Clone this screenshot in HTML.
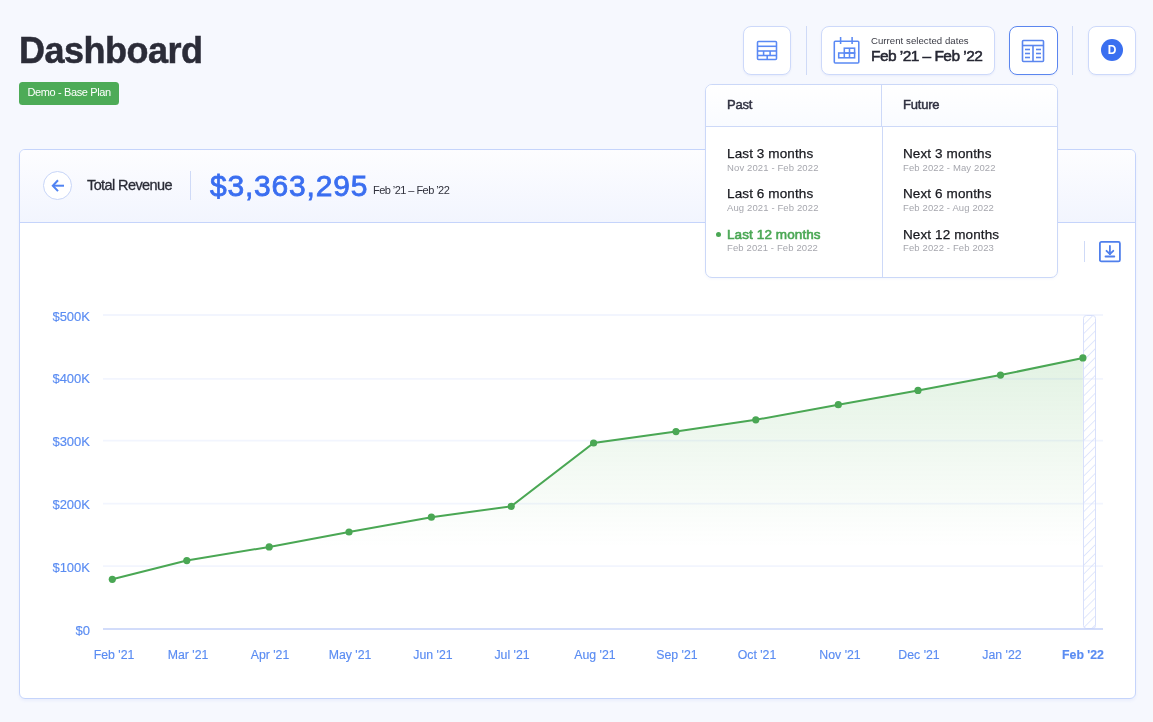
<!DOCTYPE html>
<html><head><meta charset="utf-8">
<style>
*{box-sizing:border-box;margin:0;padding:0}
html,body{width:1153px;height:722px;overflow:hidden;background:#f6f8fe;font-family:"Liberation Sans",sans-serif;position:relative}
.abs{position:absolute;will-change:transform}
.title{left:19px;top:29px;font-size:36px;font-weight:bold;color:#2b2c38;line-height:44px;white-space:nowrap;letter-spacing:-0.5px;-webkit-text-stroke:0.5px #2b2c38}
.badge{left:19px;top:82px;width:100px;height:23px;background:#4dab57;border-radius:3.5px;color:#fff;font-size:11px;line-height:21px;padding-left:8.5px;letter-spacing:-0.38px;white-space:nowrap}
.btn{background:#fff;border:1px solid #cdd9fa;border-radius:8px;box-shadow:0 1px 2px rgba(60,90,200,0.08)}
.vdiv{width:1px;background:#cfdaf7}
.card{left:19px;top:149px;width:1117px;height:550px;background:#fff;border:1px solid #c5d4fb;border-radius:6px;overflow:hidden;box-shadow:0 2px 3px rgba(80,110,220,0.07)}
.chead{left:0;top:0;width:100%;height:73px;background:linear-gradient(#fdfdff,#f2f5fe);border-bottom:1px solid #c5d4fb}
.dd{left:705px;top:84px;width:353px;height:194px;background:#fff;border:1px solid #cbd8f8;border-radius:7px;box-shadow:0 1px 3px rgba(60,90,200,0.05);overflow:hidden}
.ddh{font-size:13px;color:#2f3040;white-space:nowrap;letter-spacing:-0.2px;-webkit-text-stroke:0.45px #2f3040}
.opt{font-size:13.5px;color:#18191f;white-space:nowrap;letter-spacing:0.12px;-webkit-text-stroke:0.25px #18191f}
.sub{font-size:9.5px;color:#a6a7ae;white-space:nowrap;letter-spacing:0.12px}
.ylab{font-size:13px;color:#5a8cf2;-webkit-text-stroke:0.15px #5a8cf2;text-align:right;width:60px;white-space:nowrap}
.xlab{font-size:12.3px;color:#5a8cf2;-webkit-text-stroke:0.15px #5a8cf2;white-space:nowrap;text-align:center;width:80px}
</style></head><body>
<div class="abs title">Dashboard</div>
<div class="abs badge">Demo - Base Plan</div>

<!-- toolbar -->
<div class="abs btn" style="left:743px;top:26px;width:48px;height:49px"></div>
<svg class="abs" style="left:743px;top:26px" width="48" height="49" viewBox="0 0 48 49">
  <g fill="none" stroke="#5a89f4" stroke-width="1.55">
    <rect x="14.5" y="15.5" width="19" height="18" rx="1"/>
    <line x1="14.5" y1="20.3" x2="33.5" y2="20.3"/>
    <line x1="14.5" y1="25" x2="33.5" y2="25"/>
    <line x1="14.5" y1="29.5" x2="33.5" y2="29.5"/>
    <line x1="20.6" y1="25" x2="20.6" y2="29.5"/>
    <line x1="27.1" y1="25" x2="27.1" y2="29.5"/>
    <line x1="24.2" y1="29.5" x2="24.2" y2="33.5"/>
  </g>
</svg>
<div class="abs vdiv" style="left:806px;top:26px;height:49px"></div>
<div class="abs btn" style="left:821px;top:26px;width:174px;height:49px"></div>
<svg class="abs" style="left:821px;top:26px" width="48" height="49" viewBox="0 0 48 49">
  <g fill="none" stroke="#5a89f4" stroke-width="1.55">
    <rect x="13.3" y="15.2" width="24.5" height="21.8" rx="1"/>
    <line x1="19.6" y1="11" x2="19.6" y2="18"/>
    <line x1="31.1" y1="11" x2="31.1" y2="18"/>
    <rect x="17.7" y="27" width="15.9" height="4.8"/>
    <rect x="23.3" y="22.2" width="10.3" height="4.8"/>
    <line x1="23.3" y1="27" x2="23.3" y2="31.8"/>
    <line x1="28.5" y1="22.2" x2="28.5" y2="31.8"/>
  </g>
</svg>
<div class="abs" style="left:871px;top:35.2px;font-size:9.6px;color:#3a3b45;white-space:nowrap;letter-spacing:0.05px">Current selected dates</div>
<div class="abs" style="left:871px;top:46.9px;font-size:15.5px;color:#262733;white-space:nowrap;letter-spacing:-0.55px;-webkit-text-stroke:0.5px #262733">Feb ’21 – Feb ’22</div>
<div class="abs btn" style="left:1009px;top:26px;width:49px;height:49px;border-color:#5b86ef"></div>
<svg class="abs" style="left:1009px;top:27px" width="49" height="49" viewBox="0 0 49 49">
  <g fill="none" stroke="#5b86ef" stroke-width="1.6">
    <rect x="13.5" y="13.5" width="21" height="21" rx="1"/>
    <line x1="13.5" y1="18.5" x2="34.5" y2="18.5"/>
    <line x1="24" y1="18.5" x2="24" y2="34.5"/>
  </g>
  <g stroke="#5b86ef" stroke-width="1.6">
    <line x1="16" y1="22.5" x2="21" y2="22.5"/><line x1="16" y1="26.5" x2="21" y2="26.5"/><line x1="16" y1="30.5" x2="21" y2="30.5"/>
    <line x1="27" y1="22.5" x2="32" y2="22.5"/><line x1="27" y1="26.5" x2="32" y2="26.5"/><line x1="27" y1="30.5" x2="32" y2="30.5"/>
  </g>
</svg>
<div class="abs vdiv" style="left:1072px;top:26px;height:49px"></div>
<div class="abs btn" style="left:1088px;top:26px;width:48px;height:49px"></div>
<div class="abs" style="left:1101px;top:39px;width:22px;height:22px;border-radius:50%;background:#3a6ff0;color:#fff;font-size:12px;font-weight:bold;text-align:center;line-height:22px">D</div>

<!-- card -->
<div class="abs card">
  <div class="abs chead"></div>
</div>


<!-- card header content -->
<div class="abs" style="left:43px;top:171px;width:29px;height:29px;border:1px solid #c6d4f7;border-radius:50%;background:#fff"></div>
<svg class="abs" style="left:43px;top:171px" width="29" height="29" viewBox="0 0 29 29"><g fill="none" stroke="#5083f2" stroke-width="2" stroke-linecap="butt" stroke-linejoin="miter"><line x1="10" y1="14.7" x2="21" y2="14.7"/><polyline points="15,9.3 9.8,14.7 15,20.1"/></g></svg>
<div class="abs" style="left:87px;top:176.5px;font-size:14.5px;color:#2a2b36;white-space:nowrap;letter-spacing:-0.6px;-webkit-text-stroke:0.3px #2a2b36">Total Revenue</div>
<div class="abs vdiv" style="left:190px;top:171px;height:29px"></div>
<div class="abs" style="left:210px;top:167.7px;font-size:30px;color:#3a6ef0;white-space:nowrap;line-height:36px;letter-spacing:0.8px;-webkit-text-stroke:0.8px #3a6ef0">$3,363,295</div>
<div class="abs" style="left:372.6px;top:183.6px;font-size:11px;color:#30313c;white-space:nowrap;letter-spacing:-0.55px">Feb ’21 – Feb ’22</div>
<!-- download -->
<div class="abs vdiv" style="left:1084px;top:241px;height:21px"></div>
<svg class="abs" style="left:1098px;top:240px" width="24" height="23" viewBox="0 0 24 23"><g fill="none" stroke="#4f7fec" stroke-width="1.8" stroke-linecap="round" stroke-linejoin="round"><rect x="1.9" y="1.9" width="20" height="19.5" rx="1.5"/><line x1="11.9" y1="6" x2="11.9" y2="14"/><polyline points="8.5,10.8 11.9,14 15.3,10.8"/><line x1="7.5" y1="16.5" x2="16.3" y2="16.5"/></g></svg>
<svg class="abs" style="left:0;top:0" width="1153" height="722" viewBox="0 0 1153 722">
<defs><linearGradient id="ag" x1="0" y1="0" x2="0" y2="1"><stop offset="0" stop-color="#4caf50" stop-opacity="0.16"/><stop offset="0.7" stop-color="#4caf50" stop-opacity="0"/></linearGradient>
<pattern id="hatch" width="6.3" height="6.3" patternUnits="userSpaceOnUse" patternTransform="rotate(45)"><line x1="0" y1="0" x2="0" y2="6.3" stroke="#d3dcfb" stroke-width="1.3"/></pattern></defs>
<line x1="103" y1="315" x2="1103" y2="315" stroke="#f2f5fe" stroke-width="1.8"/>
<line x1="103" y1="378.8" x2="1103" y2="378.8" stroke="#f2f5fe" stroke-width="1.8"/>
<line x1="103" y1="440.6" x2="1103" y2="440.6" stroke="#f2f5fe" stroke-width="1.8"/>
<line x1="103" y1="503.7" x2="1103" y2="503.7" stroke="#f2f5fe" stroke-width="1.8"/>
<line x1="103" y1="566.2" x2="1103" y2="566.2" stroke="#f2f5fe" stroke-width="1.8"/>
<path d="M112.3,579.3 L186.8,560.6 L269.2,546.9 L349.0,532.0 L431.4,517.2 L511.2,506.3 L593.6,443.0 L676.0,431.6 L755.8,419.8 L838.3,404.7 L918.0,390.4 L1000.5,375.1 L1082.9,357.9 L1082.9,629 L112.3,629 Z" fill="url(#ag)"/>
<rect x="1083.5" y="315.5" width="12" height="313" rx="3" fill="url(#hatch)" stroke="#d8e0fb" stroke-width="1"/>
<line x1="103" y1="628.9" x2="1103" y2="628.9" stroke="#c3d1f8" stroke-width="1.5"/>
<polyline points="112.3,579.3 186.8,560.6 269.2,546.9 349.0,532.0 431.4,517.2 511.2,506.3 593.6,443.0 676.0,431.6 755.8,419.8 838.3,404.7 918.0,390.4 1000.5,375.1 1082.9,357.9" fill="none" stroke="#4aa754" stroke-width="2"/>
<circle cx="112.3" cy="579.3" r="3.6" fill="#4aa754"/>
<circle cx="186.8" cy="560.6" r="3.6" fill="#4aa754"/>
<circle cx="269.2" cy="546.9" r="3.6" fill="#4aa754"/>
<circle cx="349.0" cy="532.0" r="3.6" fill="#4aa754"/>
<circle cx="431.4" cy="517.2" r="3.6" fill="#4aa754"/>
<circle cx="511.2" cy="506.3" r="3.6" fill="#4aa754"/>
<circle cx="593.6" cy="443.0" r="3.6" fill="#4aa754"/>
<circle cx="676.0" cy="431.6" r="3.6" fill="#4aa754"/>
<circle cx="755.8" cy="419.8" r="3.6" fill="#4aa754"/>
<circle cx="838.3" cy="404.7" r="3.6" fill="#4aa754"/>
<circle cx="918.0" cy="390.4" r="3.6" fill="#4aa754"/>
<circle cx="1000.5" cy="375.1" r="3.6" fill="#4aa754"/>
<circle cx="1082.9" cy="357.9" r="3.6" fill="#4aa754"/>
</svg>
<div class="abs ylab" style="left:30px;top:308.6px">$500K</div>
<div class="abs ylab" style="left:30px;top:371.4px">$400K</div>
<div class="abs ylab" style="left:30px;top:434.3px">$300K</div>
<div class="abs ylab" style="left:30px;top:497.1px">$200K</div>
<div class="abs ylab" style="left:30px;top:559.9px">$100K</div>
<div class="abs ylab" style="left:30px;top:622.7px">$0</div>
<div class="abs xlab" style="left:73.5px;top:648px;">Feb '21</div>
<div class="abs xlab" style="left:148.0px;top:648px;">Mar '21</div>
<div class="abs xlab" style="left:230.4px;top:648px;">Apr '21</div>
<div class="abs xlab" style="left:310.2px;top:648px;">May '21</div>
<div class="abs xlab" style="left:392.6px;top:648px;">Jun '21</div>
<div class="abs xlab" style="left:472.4px;top:648px;">Jul '21</div>
<div class="abs xlab" style="left:554.8px;top:648px;">Aug '21</div>
<div class="abs xlab" style="left:637.2px;top:648px;">Sep '21</div>
<div class="abs xlab" style="left:717.0px;top:648px;">Oct '21</div>
<div class="abs xlab" style="left:799.5px;top:648px;">Nov '21</div>
<div class="abs xlab" style="left:879.2px;top:648px;">Dec '21</div>
<div class="abs xlab" style="left:961.7px;top:648px;">Jan '22</div>
<div class="abs xlab" style="left:1042.9px;top:648px;font-weight:bold;"">Feb '22</div>
<!-- dropdown -->
<div class="abs dd">
  <div class="abs" style="left:0;top:0;width:100%;height:42px;background:linear-gradient(#ffffff,#f9fbff);border-bottom:1px solid #cdd9f8"></div>
  <div class="abs" style="left:175px;top:0;width:1px;height:42px;background:#cdd9f8"></div><div class="abs" style="left:176px;top:42px;width:1px;height:160px;background:#cdd9f8"></div>
  <div class="abs ddh" style="left:21.3px;top:12px">Past</div>
  <div class="abs ddh" style="left:197.3px;top:12px">Future</div>
  <div class="abs opt" style="left:21px;top:61px">Last 3 months</div>
  <div class="abs sub" style="left:21px;top:77.2px">Nov 2021 - Feb 2022</div>
  <div class="abs opt" style="left:21px;top:101px">Last 6 months</div>
  <div class="abs sub" style="left:21px;top:117.2px">Aug 2021 - Feb 2022</div>
  <div class="abs" style="left:9.5px;top:147.2px;width:5px;height:5px;border-radius:50%;background:#4aa754"></div>
  <div class="abs opt" style="left:21px;top:142px;color:#4aa754;-webkit-text-stroke:0.6px #4aa754;letter-spacing:0.1px">Last 12 months</div>
  <div class="abs sub" style="left:21px;top:157.2px">Feb 2021 - Feb 2022</div>
  <div class="abs opt" style="left:197px;top:61px">Next 3 months</div>
  <div class="abs sub" style="left:197px;top:77.2px">Feb 2022 - May 2022</div>
  <div class="abs opt" style="left:197px;top:101px">Next 6 months</div>
  <div class="abs sub" style="left:197px;top:117.2px">Feb 2022 - Aug 2022</div>
  <div class="abs opt" style="left:197px;top:142px">Next 12 months</div>
  <div class="abs sub" style="left:197px;top:157.2px">Feb 2022 - Feb 2023</div>
</div>
</body></html>
